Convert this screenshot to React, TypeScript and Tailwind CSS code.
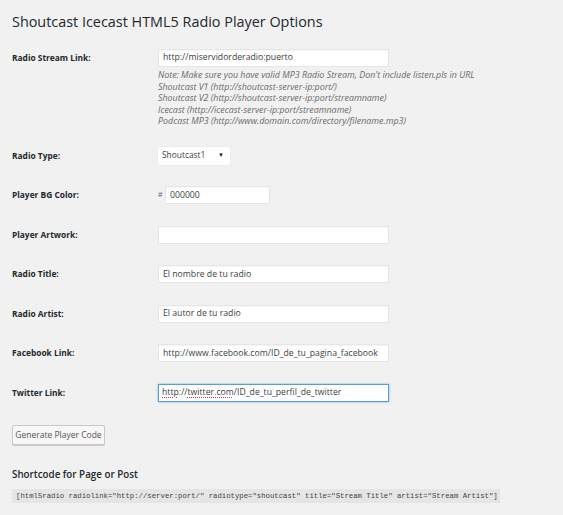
import React from "react";

const notes = [
  "Note: Make sure you have valid MP3 Radio Stream, Don't include listen.pls in URL",
  "Shoutcast V1 (http://shoutcast-server-ip:port/)",
  "Shoutcast V2 (http://shoutcast-server-ip:port/streamname)",
  "Icecast (http://icecast-server-ip:port/streamname)",
  "Podcast MP3 (http://www.domain.com/directory/filename.mp3)",
];

function Label({ text }: { text: string }) {
  return <div className="w-[146px] shrink-0 font-bold text-[8.4px] leading-[18px] text-[#23282d]">{text}</div>;
}

function TextBox({ value, width = "w-[231px]" }: { value: string; width?: string }) {
  return (
    <div className={`${width} h-[18px] bg-white border border-[#e6e6e6] shadow-[inset_0_1px_1px_rgba(0,0,0,0.04)] px-[4px] flex items-center text-[8.7px] text-[#3a3f44] whitespace-nowrap overflow-hidden`}>
      {value}
    </div>
  );
}

function Row({ label, children }: { label: string; children: React.ReactNode }) {
  return (
    <div className="flex items-start py-[10.75px]">
      <Label text={label} />
      <div>{children}</div>
    </div>
  );
}

export default function App() {
  return (
    <div className="min-h-[515px] w-[563px] bg-[#f1f1f1] px-[12px] pt-[12px] font-['Open_Sans',sans-serif]">
      <h1 className="text-[14.4px] leading-[20px] text-[#23282d]">Shoutcast Icecast HTML5 Radio Player Options</h1>

      <div className="mt-[6px]">
        <div className="flex items-start pt-[11px] pb-[9px]">
          <Label text="Radio Stream Link:" />
          <div>
            <TextBox value="http://miservidorderadio:puerto" />
            <div className="mt-[2px] italic text-[8.9px] leading-[11.6px] text-[#6a6a6a]">
              {notes.map((n) => (
                <div key={n} className="whitespace-nowrap">{n}</div>
              ))}
            </div>
          </div>
        </div>

        <Row label="Radio Type:">
          <div className="w-[72px] h-[18px] bg-white shadow-[0_0_1px_rgba(0,0,0,0.12)] flex items-center justify-between pl-[4px] pr-[6px] text-[8.4px] text-[#3a3f44]">
            <span>Shoutcast1</span>
            <span className="text-[6px] text-[#222]">▼</span>
          </div>
        </Row>

        <Row label="Player BG Color:">
          <div className="flex items-center">
            <span className="text-[7px] text-[#666] w-[7px]">#</span>
            <TextBox value="000000" width="w-[105px]" />
          </div>
        </Row>

        <Row label="Player Artwork:">
          <TextBox value="" />
        </Row>

        <Row label="Radio Title:">
          <TextBox value="El nombre de tu radio" />
        </Row>

        <Row label="Radio Artist:">
          <TextBox value="El autor de tu radio" />
        </Row>

        <Row label="Facebook Link:">
          <TextBox value="http://www.facebook.com/ID_de_tu_pagina_facebook" />
        </Row>

        <Row label="Twitter Link:">
          <div className="w-[231px] h-[18px] bg-white border border-[#5b9dd9] shadow-[0_0_2px_rgba(30,140,190,0.6)] px-[3px] flex items-center text-[8.7px] text-[#3a3f44] whitespace-nowrap">
            <span className="underline decoration-dotted decoration-[#e03030] decoration-[1px] underline-offset-[1.5px]">http</span>
            <span>://</span>
            <span className="underline decoration-dotted decoration-[#e03030] decoration-[1px] underline-offset-[1.5px]">twitter.com</span>
            <span>/ID_de_tu_perfil_de_twitter</span>
          </div>
        </Row>
      </div>

      <button className="mt-[13px] h-[20px] w-[93px] border border-[#c8c8c8] bg-[#f7f7f7] rounded-[2px] shadow-[0_1px_0_#ccc] text-[8.5px] text-[#555] whitespace-nowrap">
        Generate Player Code
      </button>

      <h2 className="mt-[22px] font-semibold text-[9.8px] leading-[16px] text-[#23282d]">Shortcode for Page or Post</h2>

      <div className="mt-[6px] w-[488px] h-[14px] bg-[#e5e5e5] px-[4px] flex items-center font-['Liberation_Mono',monospace] text-[7.3px] text-[#444] whitespace-nowrap">
        [html5radio radiolink="http://server:port/" radiotype="shoutcast" title="Stream Title" artist="Stream Artist"]
      </div>
    </div>
  );
}
